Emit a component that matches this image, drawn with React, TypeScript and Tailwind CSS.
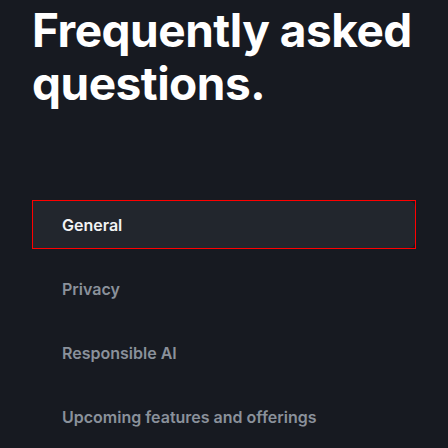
const topics = ["General", "Privacy", "Responsible AI", "Upcoming features and offerings"];

export default function App() {
  return (
    <div className="min-h-[448px] w-[448px] bg-[#171a21] px-8 pt-[4px] font-['Inter',sans-serif]">
      <h1 className="text-[46px] font-bold leading-[53px] tracking-[-0.5px] text-white">
        Frequently asked questions.
      </h1>

      {/* topic tabs */}
      <div className="mt-[90px] flex flex-col gap-[15px]">
        {topics.map((t, i) => (
          <div
            key={t}
            className={
              i === 0
                ? "h-[49px] border border-[#ff0000] bg-[#171a21]"
                : "h-[49px] border border-transparent"
            }
          >
            <div
              className={
                i === 0
                  ? "flex h-full items-center rounded-r-md bg-[#22262d] px-[29px] text-[16px] font-semibold text-[#f2f3f5]"
                  : "flex h-full items-center px-[29px] text-[16px] font-semibold text-[#8a919b]"
              }
            >
              {t}
            </div>
          </div>
        ))}
      </div>
    </div>
  );
}
